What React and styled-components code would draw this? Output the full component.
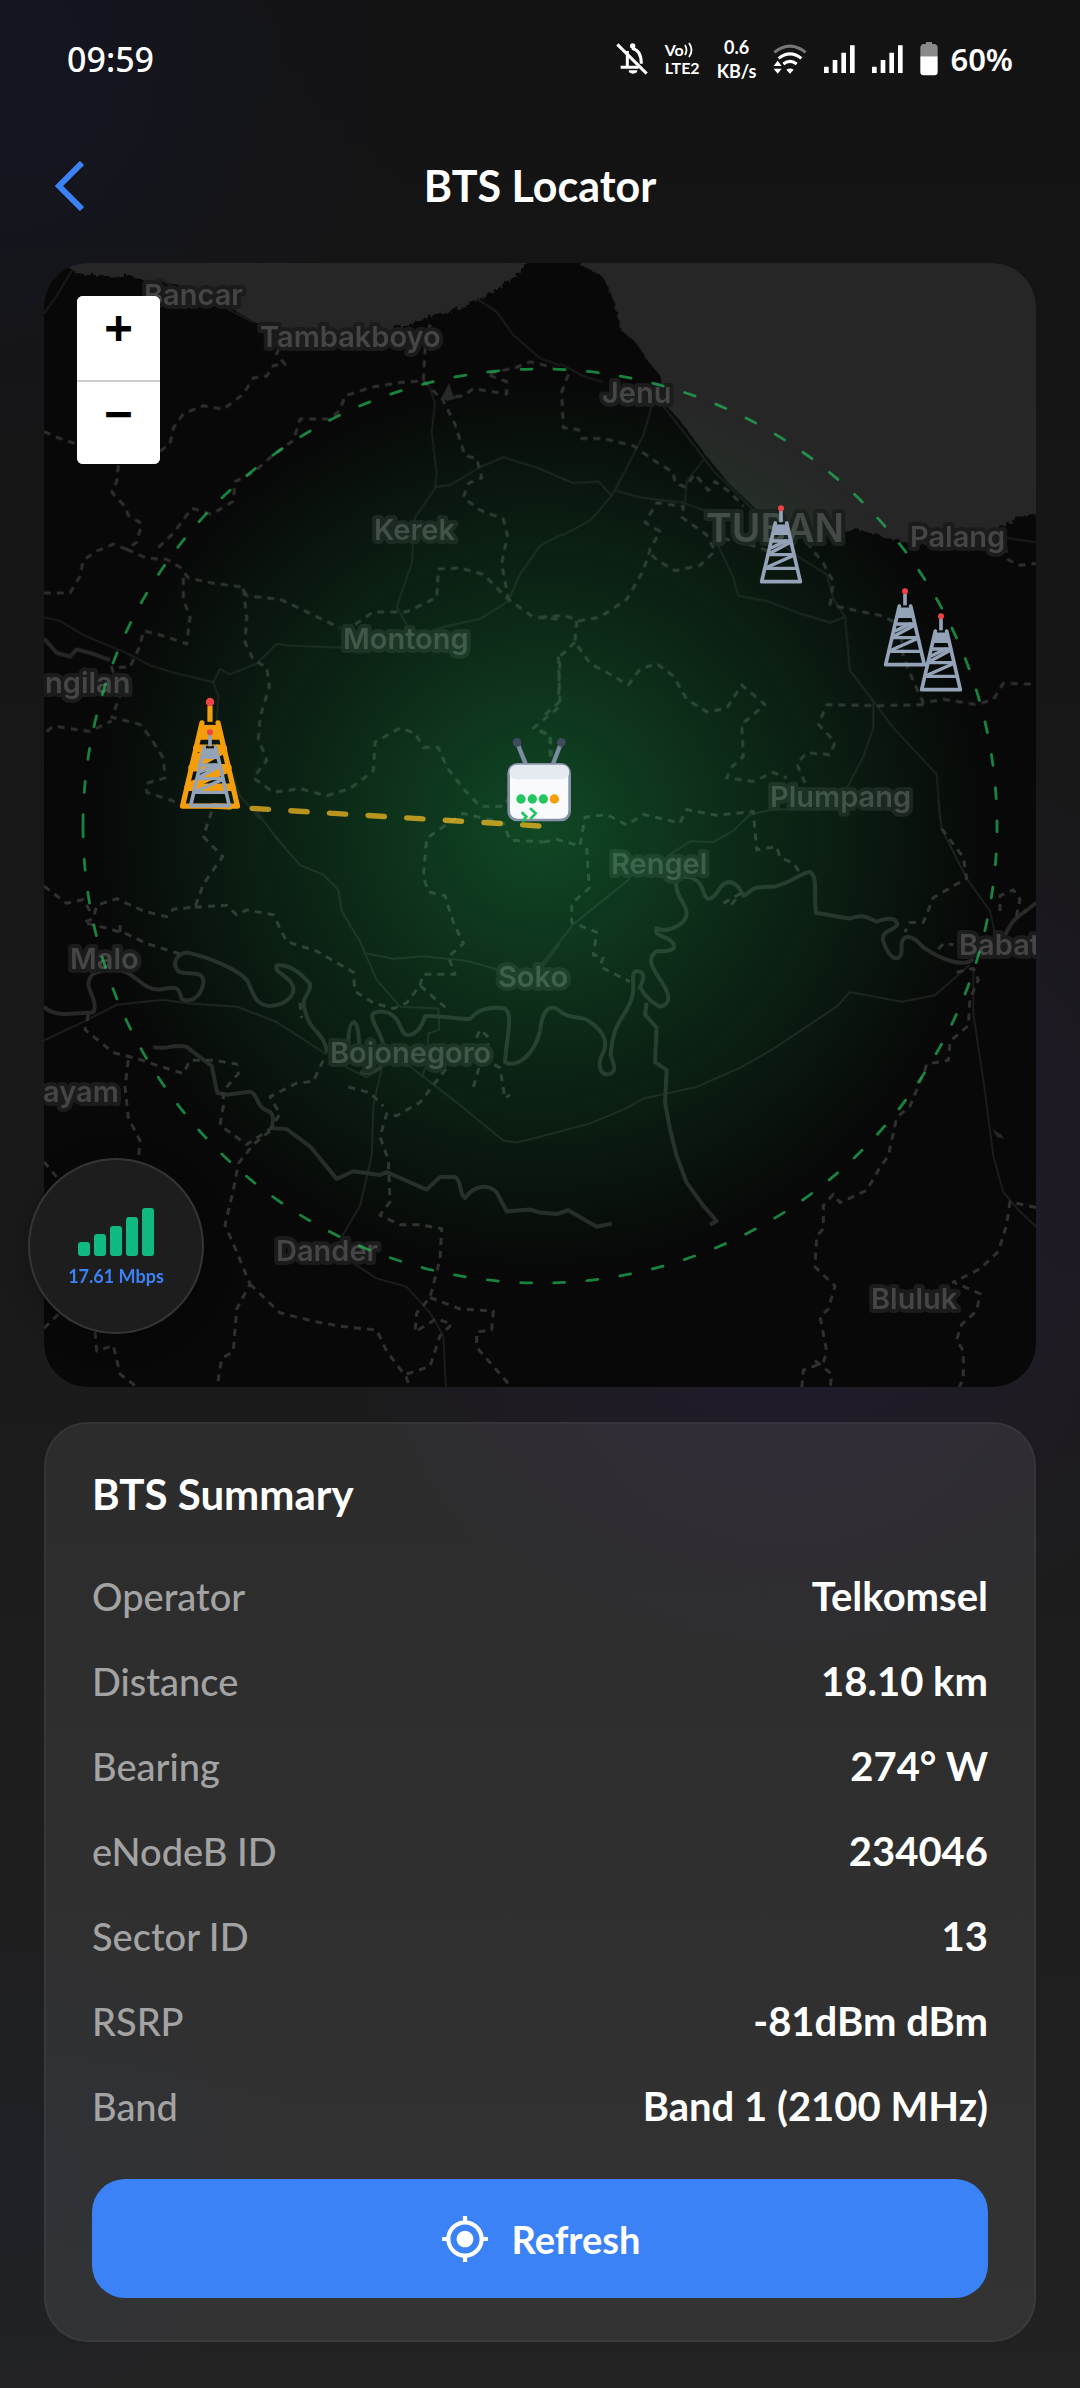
import React from 'react'
import styled, { createGlobalStyle } from 'styled-components';
import { MdMyLocation } from 'react-icons/md';

const GlobalStyle = createGlobalStyle`
  * {
    box-sizing: border-box;
  }
  body {
    margin: 0;
    background: #1a1a1a;
    color: #fff;
    font-family: Lato, 'Open Sans', sans-serif;
  }
  h1, h2, dl, dd {
    margin: 0;
  }
  button {
    border: 0;
    padding: 0;
    font-family: inherit;
    cursor: pointer;
  }
`;

const Page = styled.div`
  min-height: 100vh;
  padding: 0 44px 45px;
  background:
    radial-gradient(circle 420px at 0 60px, rgba(20, 26, 70, 0.28), transparent),
    radial-gradient(circle 500px at 73% 1180px, rgba(60, 30, 110, 0.28), transparent),
    radial-gradient(circle 300px at 0 2180px, rgba(24, 36, 70, 0.16), transparent),
    linear-gradient(#131313, #1a1a1a 55%, #222222);
`;

const StatusBar = styled.div`
  display: flex;
  align-items: center;
  justify-content: space-between;
  height: 118px;
  padding: 0 23px;
`;

const Clock = styled.span`
  font: 500 34px 'Noto Sans', sans-serif;
`;

const StatusIcons = styled.div`
  display: flex;
  align-items: center;
  gap: 17px;
`;

const Stacked = styled.div`
  display: flex;
  flex-direction: column;
  align-items: ${(props) => props.$align || 'center'};
  font: 700 ${(props) => props.$size}px/${(props) => props.$line}px Lato, sans-serif;
`;

const VoRow = styled.span`
  display: flex;
  align-items: center;
`;

const BatteryGroup = styled.div`
  display: flex;
  align-items: center;
  gap: 12px;
  font: 600 31px 'Noto Sans', sans-serif;
`;

const Header = styled.header`
  display: grid;
  grid-template-columns: 52px 1fr 52px;
  align-items: center;
  height: 136px;
  margin-bottom: 9px;
`;

const BackButton = styled.button`
  display: flex;
  justify-content: center;
  background: none;
`;

const Title = styled.h1`
  font-size: 43px;
  line-height: 52px;
  font-weight: 700;
  text-align: center;
`;

const MapSection = styled.section`
  position: relative;
`;

const MapFrame = styled.div`
  overflow: hidden;
  border-radius: 44px;
  background: #080808;
`;

const MapSvg = styled.svg`
  display: block;
  width: 100%;
  height: auto;
`;

const Lines = styled.g`
  fill: none;
  stroke-linejoin: round;
  path {
    vector-effect: non-scaling-stroke;
  }
  .road {
    stroke: #1c1c1c;
    stroke-width: 2px;
  }
  .river {
    stroke: #272727;
    stroke-width: 4px;
  }
  .border {
    stroke: #2f2f2f;
    stroke-width: 3px;
    stroke-dasharray: 7 6;
  }
`;

const PlaceName = styled.text`
  font: 600 ${(props) => props.$size || 29}px Inter, sans-serif;
  fill: #454545;
  stroke: #1b1b1b;
  stroke-width: 8px;
  stroke-linejoin: round;
  paint-order: stroke;
`;

const ZoomControl = styled.div`
  position: absolute;
  top: 33px;
  left: 33px;
  width: 83px;
  overflow: hidden;
  border-radius: 6px;
  background: #fff;
`;

const ZoomButton = styled.button`
  display: block;
  width: 100%;
  height: 84px;
  padding-bottom: 22px;
  background: #fff;
  color: #000;
  font: 700 46px/62px 'DejaVu Sans Mono', monospace;
  & + & {
    border-top: 2px solid #ccc;
  }
`;

const SpeedBadge = styled.div`
  position: absolute;
  left: -16px;
  bottom: 53px;
  display: flex;
  flex-direction: column;
  align-items: center;
  justify-content: center;
  gap: 8px;
  width: 176px;
  height: 176px;
  padding-top: 4px;
  border: 2px solid #353535;
  border-radius: 50%;
  background: #1d1d1d;
  box-shadow: 0 6px 28px rgba(0, 0, 0, 0.3);
  color: #3b82f6;
  font-size: 18px;
  line-height: 24px;
  font-weight: 700;
`;

const Bars = styled.div`
  display: flex;
  align-items: flex-end;
  gap: 4px;
`;

const Bar = styled.span`
  width: 12px;
  height: ${(props) => props.$height}px;
  border-radius: 3px;
  background: #10b981;
`;

const Card = styled.section`
  margin-top: 35px;
  padding: 44px 46px 42px;
  border: 2px solid rgba(255, 255, 255, 0.04);
  border-radius: 44px;
  background: rgba(255, 255, 255, 0.08);
`;

const CardTitle = styled.h2`
  font-size: 42px;
  line-height: 52px;
  font-weight: 700;
`;

const Details = styled.dl`
  margin: 33px 0 31px;
`;

const Row = styled.div`
  display: flex;
  align-items: center;
  justify-content: space-between;
  height: 85px;
`;

const Label = styled.dt`
  color: #a3a3a3;
  font-size: 38px;
  font-weight: 500;
`;

const Value = styled.dd`
  font-size: 40px;
  font-weight: 700;
`;

const RefreshButton = styled.button`
  display: flex;
  align-items: center;
  justify-content: center;
  gap: 22px;
  width: 100%;
  height: 119px;
  border-radius: 33px;
  background: #3b82f6;
  color: #fff;
  font-size: 38px;
  font-weight: 700;
`;

const details = [
  ['Operator', 'Telkomsel'],
  ['Distance', '18.10 km'],
  ['Bearing', '274° W'],
  ['eNodeB ID', '234046'],
  ['Sector ID', '13'],
  ['RSRP', '-81dBm dBm'],
  ['Band', 'Band 1 (2100 MHz)'],
];

const places = [
  ['Bancar', 100, 42],
  ['Tambakboyo', 216, 84],
  ['Jenu', 558, 140],
  ['Kerek', 330, 277],
  ['Montong', 299, 386],
  ['ngilan', 1, 430],
  ['TUBAN', 662, 279, 39],
  ['Palang', 866, 284],
  ['Plumpang', 726, 544],
  ['Rengel', 567, 611],
  ['Malo', 26, 706],
  ['Soko', 454, 724],
  ['Bojonegoro', 286, 800],
  ['ayam', -1, 839],
  ['Dander', 232, 998],
  ['Bluluk', 827, 1046],
  ['Babat', 915, 692],
];

// map vectors, one entry per tile
const tiles = [
  {
    transform: 'translate(-4 -3) scale(0.33333 0.35714)',
    sea: 'M70 8 L100 30 L120 38 L190 40 L270 42 L330 55 L400 62 L500 100 L560 125 L640 170 L720 195 L860 200 L1000 198 L1080 182 L1160 155 L1240 135 L1310 105 L1370 75 L1420 40 L1490 -30 L70 -30 Z',
    border: 'M12 480 L60 500 L110 515 M360 535 L390 515 L400 470 L430 430 L490 408 L550 418 L610 375 L640 330 L680 325 L700 295 L735 292 L710 262 L720 240 M235 575 L230 620 L215 650 L255 690 L265 715 L305 738 L290 790 L260 810 L220 795 L170 815 L130 840 L120 885 L90 932 L12 932 M260 810 L320 835 L380 838 L420 860 L445 890 L520 905 L605 915 L620 940 L720 950 L800 985 L900 1030 M355 805 L400 765 L455 695 L515 712 L580 675 L585 620 L640 595 L700 545 L760 505 L780 445 L870 445 L900 420 L915 380 L1000 355 L1080 343 L1150 338 L1155 250 L1170 180 M1150 338 L1200 385 L1270 380 L1300 360 L1400 375 L1400 340 L1340 320 L1430 300 L1470 285 L1540 300 M1205 385 L1245 460 L1275 548 L1310 555 L1325 610 L1285 625 L1270 665 L1320 700 L1390 725 L1402 770 L1385 850 L1405 950 M430 890 L430 950 L450 1000 L440 1075 L380 1055 L310 1038 L300 1080 L270 1140 L215 1140 L240 1220 L215 1280 L300 1300 L330 1335 L370 1395 L375 1450 L320 1465 L320 1490 L400 1515 L430 1530 M20 1320 L40 1305 L150 1320 L215 1290 M610 920 L620 1000 L615 1070 L640 1120 L680 1140 L688 1195 L660 1280 L655 1340 L680 1400 L640 1450 L700 1490 L780 1480 L860 1500 L930 1480 L1000 1430 L1005 1350 L1080 1310 L1125 1325 L1150 1365 L1195 1365 L1220 1420 L1270 1480 L1320 1530 L1390 1530 L1420 1490 M945 1020 L1000 985 L1100 985 L1190 945 L1195 865 L1260 862 L1330 880 L1405 950 L1480 1000 L1560 1005 M1555 1110 L1560 1250 L1480 1310 L1530 1330 L1530 1400',
    road: 'M12 150 L50 100 L95 30 M350 50 L450 100 L560 135 L640 175 M1310 108 L1370 145 L1420 210 L1500 275 L1560 295 M1165 345 L1185 400 L1175 480 L1190 600 L1185 640 L1125 720 L1115 850 L1070 970 L1105 1030 M1185 635 L1230 630 L1320 580 L1390 552 L1510 587 M1560 770 L1500 800 L1440 880 L1405 955 L1320 1005 L1220 1025 L960 1100 L900 1085 L750 1080 L710 1075 L650 1130 L570 1160 L540 1145 L520 1182 L400 1155 L330 1135 L270 1105 L130 1050 L60 1010 L12 1000 M520 1182 L535 1220 L530 1290 L560 1400 L600 1500 L660 1565',
    river: 'M12 1060 L50 1100 L90 1110 L110 1090 L150 1100 L210 1120',
  },
  {
    transform: 'translate(496 -3) scale(0.33333 0.35714)',
    sea: 'M115 -30 L115 8 L180 40 L200 75 L222 125 L235 190 L280 225 L320 280 L355 320 L370 400 L420 450 L490 540 L560 620 L640 690 L700 735 L760 760 L915 752 L960 752 L1040 775 L1100 790 L1200 790 L1340 760 L1400 735 L1430 712 L1520 706 V-30 Z',
    border: 'M85 320 L65 370 L70 470 L115 475 L125 500 L190 500 L280 520 L340 560 L400 595 L405 625 L435 635 L465 600 L505 645 L525 620 L570 650 L610 690 M0 1000 L70 995 L120 1010 L180 1000 L260 950 L310 870 L330 810 L360 760 L315 735 L350 680 L430 690 L425 720 L500 770 L525 815 L480 855 L405 870 L350 840 L330 820 M110 1010 L105 1070 L150 1130 L210 1160 L265 1190 L300 1145 L350 1130 L400 1165 L440 1230 L500 1265 L560 1255 L605 1190 L675 1245 L605 1300 L610 1390 L575 1420 L560 1450 L640 1460 L700 1435 L740 1450 M105 1070 L60 1110 L55 1240 L0 1285 M800 790 L850 850 L880 900 L870 965 L950 982 L1020 995 L1080 1020 L1090 1110 L1120 1180 L1150 1240 L1210 1230 L1310 1245 L1360 1230 L1390 1185 L1488 1188 M1150 1245 L1020 1248 L860 1245 L835 1300 L885 1350 L870 1385 L800 1380 L770 1410 L800 1475 L780 1500 M1395 800 L1405 840 L1440 855 L1488 850 M550 780 L640 800 L700 820 M0 1320 L30 1330 L35 1390',
    road: 'M60 290 L130 325 L190 342 M335 410 L310 490 L250 600 L215 660 L150 730 L80 765 L60 772 M0 585 L100 625 L175 620 L215 660 M225 645 L300 665 L430 680 L520 710 M435 680 L440 620 L490 560 M370 410 L430 480 L520 590 L640 700 M520 770 L580 890 L595 940 L680 955 L780 990 L870 1015 L915 1000 M700 780 L790 840 L860 880 L880 950 L915 1000 L930 1150 L1000 1235 L1060 1310 L1190 1440 L1200 1568 M1000 1240 L1000 1310 L970 1390 L920 1480 M1395 778 L1488 790',
    river: '',
  },
  {
    transform: 'translate(-4 537) scale(0.33333 0.3827)',
    sea: '',
    border: 'M515 30 L490 95 L548 148 L490 220 L465 280 L400 285 L380 305 L310 290 L230 258 L170 275 L160 310 L130 320 L200 335 L260 350 L320 375 L430 405 M12 225 L80 270 L130 260 L150 290 M240 345 L240 312 M465 280 L560 275 L590 300 L620 287 L700 300 L740 370 L830 395 L940 450 L945 500 L1000 530 L1060 545 L1100 530 L1140 485 L1220 545 M1140 485 L1150 455 L1245 455 L1225 410 L1270 375 L1240 320 L1215 250 L1165 240 L1150 200 L1160 100 L1210 70 L1270 35 L1390 60 L1410 105 L1480 108 L1510 110 M780 530 L785 570 M145 560 L135 600 L220 660 L300 678 L340 690 L430 715 L450 680 L520 680 L590 690 L595 715 L550 760 L550 800 L540 850 L620 900 L690 860 L720 820 L690 775 L770 740 L820 735 L850 680 M265 680 L255 750 L265 830 L300 890 L295 940 M690 865 L640 900 L595 950 L580 1020 L555 1110 L590 1180 L630 1265 L590 1330 L580 1440 L545 1460 L530 1540 M630 1265 L720 1340 L820 1362 L900 1375 L1010 1385 L1040 1440 L1100 1510 L1110 1540 M1100 1500 L1170 1480 L1200 1400 L1235 1370 L1190 1355 L1125 1390 L1130 1340 L1170 1300 L1200 1200 L1205 1120 L1140 1110 L1080 1110 L1020 1085 L1050 1050 L1045 940 L1020 880 L1040 820 L1070 825 L1140 790 L1220 700 M1170 1300 L1260 1330 L1360 1335 L1355 1385 L1310 1390 L1310 1430 L1360 1480 L1420 1540 M925 750 L990 765 L1030 800 M1300 750 L1320 690 L1300 640 L1320 600 L1345 620 L1340 680 L1380 700 L1395 780 L1410 770 M165 1390 L170 1440 L220 1425 L240 1500 L285 1530 M12 945 L50 985 M12 1380 L60 1340',
    road: 'M650 30 L710 100 L780 170 L850 195 L895 235 L905 290 L960 370 L1010 470 L1080 540 L1195 545 L1198 600 L1165 610 L1160 690 L1145 725 M970 400 L1060 415 L1150 408 L1280 420 L1380 445 M1500 445 L1560 375 M12 628 L130 580 L230 535 L370 522 L450 532 L590 540 L710 580 L860 665 M900 690 L980 725 L1025 700 L1000 800 L995 930 L960 1060 L900 1150 M1100 690 L1250 790 L1390 890 L1430 895 L1510 878 M930 1205 L1010 1250 L1100 1272 L1170 1340 L1210 1400 L1218 1540',
    river: 'M12 540 C40 565 80 560 160 555 C175 530 145 500 145 480 C150 450 170 450 200 445 C280 430 300 500 360 495 C400 490 415 480 425 520 C450 530 480 520 490 480 C495 440 440 460 415 448 C390 420 420 395 450 400 C500 410 590 440 620 470 C640 500 640 535 690 538 C750 535 770 500 755 480 C740 455 700 450 710 432 C750 430 780 450 810 480 C815 510 780 510 795 550 C810 610 850 600 862 660 M925 640 C925 600 930 580 942 580 C960 590 955 640 960 660 M1030 640 C1025 610 985 570 1000 557 C1040 545 1070 560 1085 600 C1100 630 1140 610 1155 565 C1190 560 1260 575 1290 572 C1320 540 1360 540 1395 545 C1420 560 1400 620 1395 685 C1430 700 1480 670 1500 605 M960 710 C980 720 1010 710 1030 690 M340 645 C380 655 400 635 440 645 L515 695 L532 765 L560 770 L630 762 C660 770 640 800 690 815 C710 830 690 850 700 858 L740 860 L810 905 L890 990 L940 970 L1020 980 L1040 972 L1160 1018 L1200 985 L1245 985 C1270 1000 1255 1030 1275 1040 C1300 1010 1340 1000 1370 1025 L1400 1075 L1470 1070 L1500 1078',
  },
  {
    transform: 'translate(496 537) scale(0.33333 0.3827)',
    sea: '',
    border: 'M10 110 L50 103 L120 120 L135 45 L200 38 L260 65 L310 38 L420 60 L440 25 L530 40 L640 30 L650 130 L710 122 L720 150 L760 165 L780 190 M140 125 L148 230 L95 270 L95 320 L170 345 L160 405 L190 410 L180 435 L270 475 M550 270 L600 245 L570 278 M1205 75 L1270 150 L1280 205 L1180 255 L1150 320 L1110 320 L1095 345 M1380 290 L1380 250 L1420 235 L1440 260 L1430 300 L1460 290 M1195 390 L1210 375 L1240 378 M1250 450 L1300 440 L1315 470 L1290 520 L1285 590 L1230 630 L1225 680 L1160 690 L1155 705 L1110 800 L1070 830 L1045 930 L1020 960 L980 1020 L900 1052 L880 1030 L850 1060 L850 1120 L830 1140 L825 1220 L885 1270 L865 1330 L840 1350 L860 1440 L850 1470 L790 1490 L785 1540 M825 1465 L875 1500 L870 1540 M1488 1065 L1410 1050 L1400 1110 L1375 1180 L1320 1225 L1240 1260 L1320 1290 L1310 1335 L1265 1370 L1250 1410 L1270 1440 L1270 1510 L1255 1540',
    road: 'M0 435 L100 325 L270 205 M385 145 L450 108 L520 110 L580 80 L630 38 L700 25 L820 25 M0 880 L150 845 L260 805 L310 780 L470 750 L500 738 L600 700 L700 650 L890 540 L930 502 L1085 527 L1185 510 L1290 430 M1195 0 L1205 75 L1280 205 L1350 290 L1365 350 M1300 440 L1300 560 L1330 730 L1360 930 L1390 1025 L1440 1075 L1488 1115',
    river: 'M0 605 C5 560 20 535 50 545 C90 580 130 560 150 580 C200 610 200 640 190 660 C170 690 180 715 200 717 C240 715 215 680 212 665 C220 570 260 570 278 510 C285 480 270 450 290 447 C320 450 310 470 300 490 C320 520 340 530 360 540 C390 535 390 515 375 490 C350 450 310 420 350 395 C380 395 410 395 400 375 C380 350 340 360 350 335 C380 350 440 325 440 295 C440 270 400 250 410 205 C450 195 480 205 490 240 C500 270 520 260 540 230 C560 205 590 210 610 250 C640 240 620 225 700 227 C760 215 780 190 810 188 C835 200 820 250 828 295 C870 300 900 305 930 310 C970 295 990 310 1010 318 C1050 305 1070 310 1072 325 C1060 345 1020 340 1030 370 C1050 420 1080 425 1085 395 C1080 350 1110 345 1150 385 C1200 415 1270 440 1300 415 M1395 355 C1420 300 1450 300 1488 268 M320 530 L315 560 L350 595 L345 685 L380 705 L375 790 L390 860 L410 930 L440 1000 L490 1060 L530 1100 L510 1110 M0 1078 L50 1082 L85 1072 L170 1115 L215 1107',
  },
];

const Tower = ({ x, y, color, scale = 1, rail = 10 }) => (
  <g transform={`translate(${x} ${y}) scale(${scale / 3})`} fill="none" stroke={color} strokeLinecap="round">
    <path d="M-17 -176 L-26 -144 H26 L17 -176 Z" fill={color} stroke="none" />
    <path d="M-12 -184 H12 V-176 H-12 Z" fill="#0b120e" stroke="none" />
    <path d="M-17 -180 L-58 -4 M17 -180 L58 -4 M-58 -4 H58" strokeWidth="11" />
    <path d="M-46 -44 H46 M-38 -85 H38 M-28 -126 H28" strokeWidth={rail} />
    <path d="M-40 -48 L36 -82 M-33 -89 L28 -122 M-28 -106 L14 -126" strokeWidth={rail} />
    <path d="M0 -216 V-182" strokeWidth="11" strokeLinecap="butt" />
    <circle cy="-224" r="9" fill="#ef4444" stroke="none" />
  </g>
);

const Router = () => (
  <g transform="translate(446 457) scale(0.33333)">
    <path d="M108 134 L82 70 M188 134 L213 70" stroke="#7d8b9e" strokeWidth="13" />
    <circle cx="81" cy="67" r="13" fill="#3f4a5c" />
    <circle cx="214" cy="67" r="13" fill="#3f4a5c" />
    <rect x="56" y="133" width="183" height="167" rx="26" fill="#f8fafc" stroke="#8490a5" strokeWidth="8" />
    <rect x="58" y="134" width="180" height="44" rx="22" fill="#e5e9f0" />
    <circle cx="93" cy="237" r="14" fill="#22c55e" />
    <circle cx="127" cy="237" r="14" fill="#22c55e" />
    <circle cx="160" cy="237" r="14" fill="#22c55e" />
    <circle cx="193" cy="237" r="14" fill="#f59e0b" />
    <path d="M95 277 L109 290 L97 304 M120 265 L137 280 L121 297" fill="none" stroke="#22c55e" strokeWidth="8" />
  </g>
);

const CoverageMap = () => (
  <MapSvg viewBox="0 0 992 1124" role="img" aria-label="Coverage map">
    <defs>
      <radialGradient id="coverage">
        <stop offset="0" stopColor="#22c55e" stopOpacity="0.34" />
        <stop offset="0.5" stopColor="#22c55e" stopOpacity="0.16" />
        <stop offset="1" stopColor="#22c55e" stopOpacity="0" />
      </radialGradient>
      <filter id="coast" x="-5%" y="-5%" width="110%" height="110%">
        <feTurbulence type="turbulence" baseFrequency="0.12" numOctaves="2" />
        <feDisplacementMap in="SourceGraphic" scale="7" />
      </filter>
    </defs>
    <g fill="#262626" filter="url(#coast)">
      {tiles.map((tile) => <path key={tile.transform} d={tile.sea} transform={tile.transform} />)}
    </g>
    {tiles.map((tile) => (
      <Lines key={tile.transform} transform={tile.transform}>
        <path className="road" d={tile.road} />
        <path className="river" d={tile.river} />
        <path className="border" d={tile.border} />
      </Lines>
    ))}
    <path d="M398 134 L405 120 L409 132 L414 135 L403 138 Z M948 866 L958 872 L960 876 L953 874 Z" fill="#262626" />
    {places.map(([name, x, y, size]) => (
      <PlaceName key={name} x={x} y={y} $size={size}>{name}</PlaceName>
    ))}
    <circle cx="496" cy="563" r="457" fill="url(#coverage)" />
    <path
      d="M39 563 a457 457 0 1 0 914 0 a457 457 0 1 0 -914 0"
      fill="none"
      stroke="#22c55e"
      strokeOpacity="0.65"
      strokeWidth="2.8"
      strokeLinecap="round"
      strokeDasharray="11 22.25"
    />
    <path
      d="M169.5 543 L496 563"
      stroke="#fbbf24"
      strokeOpacity="0.72"
      strokeWidth="5.4"
      strokeLinecap="round"
      strokeDasharray="16.4 22.3"
    />
    <Tower x={166} y={545} color="#f59e0b" scale={1.42} rail={16} />
    <Tower x={166} y={544} color="#94a3b8" />
    <Tower x={737} y={320} color="#94a3b8" />
    <Tower x={861} y={403} color="#94a3b8" />
    <Tower x={897} y={428} color="#94a3b8" />
    <Router />
  </MapSvg>
);

const BellOffIcon = () => (
  <svg width="32" height="32" viewBox="0 0 96 96" fill="none" stroke="#fff" strokeWidth="9" aria-hidden="true">
    <path d="M34 24 V74 M14 73 H68 M48 16 C66 20 76 34 76 62" />
    <path d="M4 4 L92 92" />
    <circle cx="50" cy="9" r="8" fill="#fff" stroke="none" />
    <path d="M38 82 H64 A13 10 0 0 1 38 82 Z" fill="#fff" stroke="none" />
  </svg>
);

const WifiIcon = () => (
  <svg width="34" height="30" viewBox="0 0 102 90" fill="none" stroke="#fff" strokeWidth="9" aria-hidden="true">
    <path d="M4 25 Q51 -12 98 25" stroke="#777" />
    <path d="M17 43 Q51 16 85 43" />
    <path d="M31 60 Q51 44 71 60" />
    <path d="M40 77 Q51 70 62 77 L51 89 Z M2 66 L14 50 L26 66 Z M2 74 L14 89 L26 74 Z" fill="#fff" stroke="none" />
  </svg>
);

const SignalIcon = () => (
  <svg width="31" height="28" viewBox="0 0 93 84" fill="#fff" aria-hidden="true">
    <path d="M0 65 H14 V84 H0 Z M26 45 H40 V84 H26 Z M52 23 H66 V84 H52 Z M78 1 H92 V84 H78 Z" />
  </svg>
);

const BatteryIcon = () => (
  <svg width="18" height="34" viewBox="0 0 54 102" aria-hidden="true">
    <path d="M18 0 H36 V6 H44 Q53 8 53 18 V43 H1 V18 Q1 8 10 6 H18 Z" fill="#8a8a8a" />
    <path d="M1 43 H53 V90 Q53 100 43 100 H11 Q1 100 1 90 Z" fill="#fff" />
  </svg>
);

const App = () => {
  return (
    <Page>
      <GlobalStyle />
      <StatusBar>
        <Clock>09:59</Clock>
        <StatusIcons>
          <BellOffIcon />
          <Stacked $size={16} $line={18} $align="flex-start">
            <VoRow>
              Vo
              <svg width="10" height="16" viewBox="0 0 10 16" fill="none" stroke="#fff" strokeWidth="1.8" aria-hidden="true">
                <path d="M1 3 Q4 8 1 13 M5 1 Q10 8 5 15" />
              </svg>
            </VoRow>
            <span>LTE2</span>
          </Stacked>
          <Stacked $size={18} $line={24}>
            <span>0.6</span>
            <span>KB/s</span>
          </Stacked>
          <WifiIcon />
          <SignalIcon />
          <SignalIcon />
          <BatteryGroup>
            <BatteryIcon />
            60%
          </BatteryGroup>
        </StatusIcons>
      </StatusBar>
      <Header>
        <BackButton aria-label="Back">
          <svg width="30" height="50" viewBox="0 0 30 50" fill="none" stroke="#3b82f6" strokeWidth="6" aria-hidden="true">
            <path d="M27 2 L4 25 L27 48" />
          </svg>
        </BackButton>
        <Title>BTS Locator</Title>
      </Header>
      <MapSection>
        <MapFrame>
          <CoverageMap />
        </MapFrame>
        <ZoomControl>
          <ZoomButton aria-label="Zoom in">+</ZoomButton>
          <ZoomButton aria-label="Zoom out">−</ZoomButton>
        </ZoomControl>
        <SpeedBadge>
          <Bars>
            {[14, 22, 30, 39, 48].map((height) => <Bar key={height} $height={height} />)}
          </Bars>
          17.61 Mbps
        </SpeedBadge>
      </MapSection>
      <Card>
        <CardTitle>BTS Summary</CardTitle>
        <Details>
          {details.map(([label, value]) => (
            <Row key={label}>
              <Label>{label}</Label>
              <Value>{value}</Value>
            </Row>
          ))}
        </Details>
        <RefreshButton>
          <MdMyLocation size={50} aria-hidden="true" />
          Refresh
        </RefreshButton>
      </Card>
    </Page>
  )
};

export default App
